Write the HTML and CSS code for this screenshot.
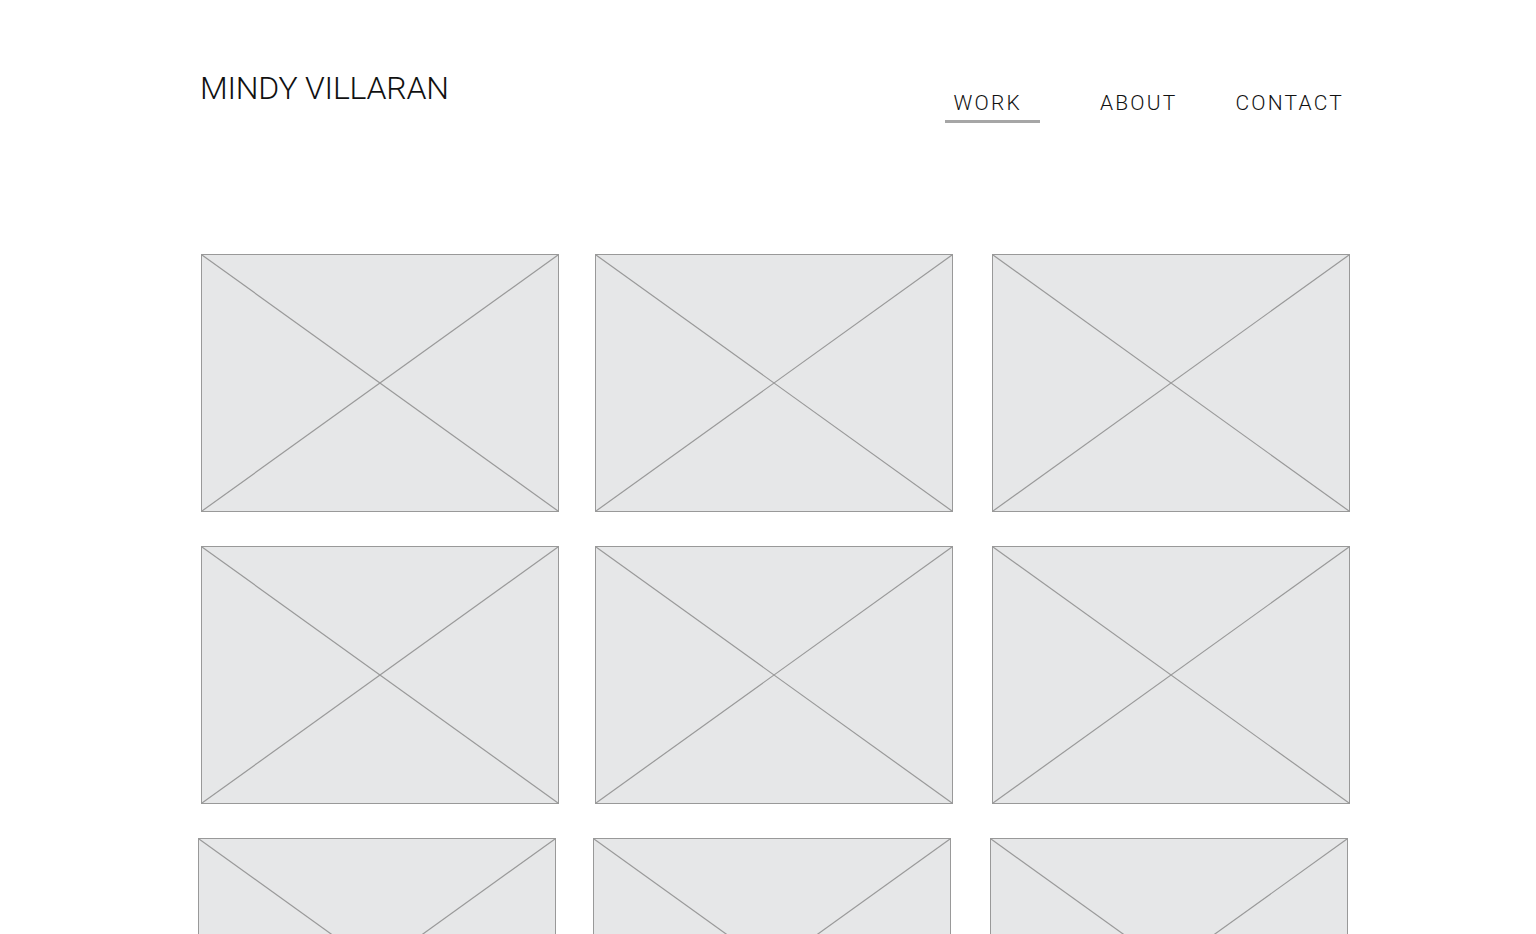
FILE: index.html
```html
<!DOCTYPE html>
<html lang="en">
<head>
<meta charset="utf-8">
<title>Mindy Villaran</title>
<link rel="stylesheet" href="styles.css">
</head>
<body>
<div class="page">
  <header class="header">
    <div class="name">MINDY VILLARAN</div>
    <nav class="nav">
      <a class="nav-item active">WORK</a>
      <a class="nav-item">ABOUT</a>
      <a class="nav-item">CONTACT</a>
    </nav>
  </header>
  <main class="grid">
    <div class="ph"><svg viewBox="0 0 100 100" preserveAspectRatio="none"><line x1="0" y1="0" x2="100" y2="100"/><line x1="100" y1="0" x2="0" y2="100"/></svg></div>
    <div class="ph"><svg viewBox="0 0 100 100" preserveAspectRatio="none"><line x1="0" y1="0" x2="100" y2="100"/><line x1="100" y1="0" x2="0" y2="100"/></svg></div>
    <div class="ph"><svg viewBox="0 0 100 100" preserveAspectRatio="none"><line x1="0" y1="0" x2="100" y2="100"/><line x1="100" y1="0" x2="0" y2="100"/></svg></div>
    <div class="ph"><svg viewBox="0 0 100 100" preserveAspectRatio="none"><line x1="0" y1="0" x2="100" y2="100"/><line x1="100" y1="0" x2="0" y2="100"/></svg></div>
    <div class="ph"><svg viewBox="0 0 100 100" preserveAspectRatio="none"><line x1="0" y1="0" x2="100" y2="100"/><line x1="100" y1="0" x2="0" y2="100"/></svg></div>
    <div class="ph"><svg viewBox="0 0 100 100" preserveAspectRatio="none"><line x1="0" y1="0" x2="100" y2="100"/><line x1="100" y1="0" x2="0" y2="100"/></svg></div>
    <div class="ph shift first"><svg viewBox="0 0 100 100" preserveAspectRatio="none"><line x1="0" y1="0" x2="100" y2="100"/><line x1="100" y1="0" x2="0" y2="100"/></svg></div>
    <div class="ph shift"><svg viewBox="0 0 100 100" preserveAspectRatio="none"><line x1="0" y1="0" x2="100" y2="100"/><line x1="100" y1="0" x2="0" y2="100"/></svg></div>
    <div class="ph shift"><svg viewBox="0 0 100 100" preserveAspectRatio="none"><line x1="0" y1="0" x2="100" y2="100"/><line x1="100" y1="0" x2="0" y2="100"/></svg></div>
  </main>
</div>
</body>
</html>
```

FILE: styles.css
```css
html, body {
  margin: 0;
  padding: 0;
  background: #ffffff;
  overflow: hidden;
  height: 934px;
}

.page {
  width: 1149px;
  height: 934px;
  padding-left: 201px;
  overflow: hidden;
  font-family: Roboto, "Liberation Sans", sans-serif;
  color: #111111;
}

.header {
  display: flex;
  justify-content: space-between;
  align-items: flex-start;
  padding-top: 72px;
  height: 183px;
  box-sizing: border-box;
}

.name {
  font-size: 32px;
  font-weight: 300;
  line-height: 32px;
  letter-spacing: -0.2px;
  margin-left: -1px;
}

.nav {
  display: flex;
  margin-top: 21px;
  margin-right: 6px;
}

.nav-item {
  display: block;
  font-size: 21px;
  font-weight: 300;
  line-height: 21px;
  letter-spacing: 2.2px;
  padding: 0 0 6px;
  border-bottom: 3px solid transparent;
}

.nav-item:nth-child(1) {
  padding-left: 8px;
  padding-right: 18px;
}

.nav-item:nth-child(2) {
  margin-left: 60px;
}

.nav-item:nth-child(3) {
  margin-left: 58px;
}

.nav-item.active {
  border-bottom-color: #a6a6a6;
}

.grid {
  display: grid;
  grid-template-columns: 394px 397px 358px;
  grid-auto-rows: 258px;
  row-gap: 34px;
  padding-top: 71px;
}

.ph {
  box-sizing: border-box;
  width: 358px;
  border: 1px solid #999999;
  background: #e6e7e8;
}

.ph.shift {
  margin-left: -2px;
}

.ph.shift.first {
  margin-left: -3px;
}

.ph svg {
  display: block;
  width: 100%;
  height: 100%;
}

.ph line {
  stroke: #999999;
  stroke-width: 1.2;
  vector-effect: non-scaling-stroke;
}
```
